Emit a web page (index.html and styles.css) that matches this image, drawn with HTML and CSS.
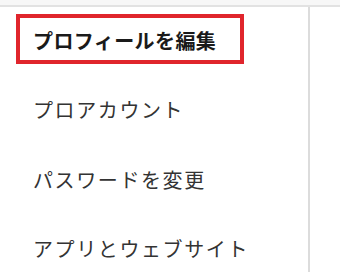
FILE: index.html
```html
<!DOCTYPE html>
<html lang="ja">
<head>
  <meta charset="UTF-8" />
  <meta name="viewport" content="width=device-width, initial-scale=1.0" />
  <title>設定</title>
  <link rel="stylesheet" href="styles.css">
</head>
<body>
  <div class="topbar"></div>
  <div class="layout">
    <nav class="sidebar">
      <a class="nav-item active" href="#">プロフィールを編集</a>
      <a class="nav-item" href="#">プロアカウント</a>
      <a class="nav-item" href="#">パスワードを変更</a>
      <a class="nav-item" href="#">アプリとウェブサイト</a>
    </nav>
    <main class="content"></main>
  </div>
</body>
</html>
```

FILE: styles.css
```css
body {
  margin: 0;
  background: #fff;
  font-family: "Noto Sans CJK JP", "Noto Sans", sans-serif;
  overflow: hidden;
}

.topbar {
  height: 5px;
  background: #f7f7f7;
  border-bottom: 2px solid #e2e2e2;
}

.layout {
  display: flex;
  height: 265px;
}

.sidebar {
  width: 310px;
  border-right: 2px solid #dcdcdc;
  display: flex;
  flex-direction: column;
  align-items: flex-start;
  gap: 19px;
  padding: 7px 0 0 16px;
  box-sizing: border-box;
}

.nav-item {
  display: flex;
  align-items: center;
  height: 52px;
  box-sizing: border-box;
  padding: 3px 13px 0;
  border: 4px solid transparent;
  font-size: 20px;
  letter-spacing: 1.6px;
  color: #333;
  text-decoration: none;
}

.nav-item.active {
  border-color: #e0252c;
  padding-right: 24px;
  font-weight: bold;
  letter-spacing: 0.4px;
  color: #1a1a1a;
}

.content {
  flex: 1;
}
```
